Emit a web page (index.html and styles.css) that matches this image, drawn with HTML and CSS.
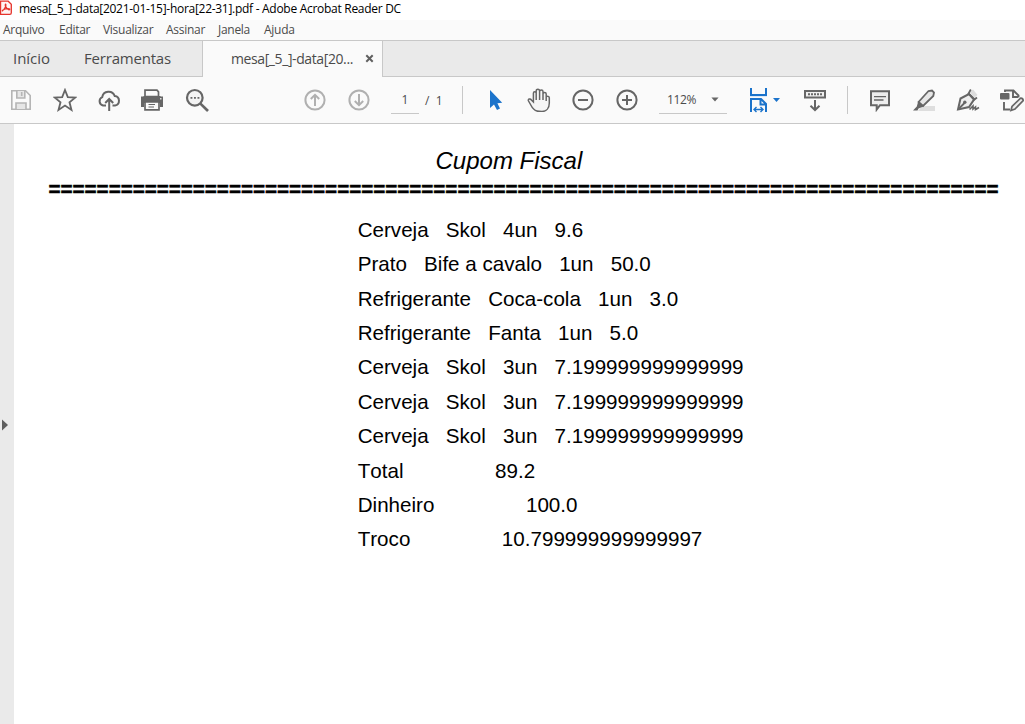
FILE: index.html
```html
<!DOCTYPE html>
<html lang="pt-BR">
<head>
<meta charset="utf-8">
<title>mesa[_5_]-data[2021-01-15]-hora[22-31].pdf - Adobe Acrobat Reader DC</title>
<link rel="stylesheet" href="styles.css">
</head>
<body>
<div class="window">
  <header class="titlebar">
    <svg class="app-icon" width="13" height="16" viewBox="0 0 13 16"><path d="M-2 1.2H8.2L11.3 4.3V12.8Q11.3 14.4 9.8 14.4H-2" fill="#fff4f3" stroke="#e5332c" stroke-width="1.3"/><path d="M.6 1V14.5" stroke="#e5332c" stroke-width="1.2"/><path d="M2.5 10.6C4 9.8 6.4 6 5.9 4.5C5.4 3.5 4.8 4.9 5.7 6.5C6.7 8.4 8.8 10.5 9.7 9.5C10.4 8.2 5.5 8.3 3.4 9.7C2.2 10.3 1.9 11.2 2.9 10.7" fill="none" stroke="#e5332c" stroke-width="1.2"/></svg>
    <span class="window-title">mesa[_5_]-data[2021-01-15]-hora[22-31].pdf - Adobe Acrobat Reader DC</span>
  </header>
  <nav class="menubar">
    <span class="m-file">Arquivo</span><span class="m-edit">Editar</span><span class="m-view">Visualizar</span><span class="m-sign">Assinar</span><span class="m-window">Janela</span><span class="m-help">Ajuda</span>
  </nav>
  <div class="tabs">
    <span class="tab home">Início</span>
    <span class="tab tools">Ferramentas</span>
    <div class="tab active"><span>mesa[_5_]-data[20...</span><svg width="9" height="9" viewBox="0 0 9 9"><path d="M1.3 1.3L7.7 7.7M7.7 1.3L1.3 7.7" stroke="#606060" stroke-width="2"/></svg></div>
  </div>
  <div class="toolbar">
    <div class="group files">
      <svg class="icon" viewBox="0 0 24 24"><g fill="none" stroke="#b5b5b5" stroke-width="1.6"><path d="M2.8 2.8H16.5L21.2 7.5V21.2H2.8Z"/><path d="M7.8 3V10H15.8V3M7 21V15H17V21" fill="#e6e6e6"/><path d="M12.7 4V8"/></g></svg>
      <svg class="icon" viewBox="0 0 24 24"><path d="M12 2L14.8 9.1L22.4 9.5L16.5 14.3L18.5 21.9L12 17.6L5.5 21.9L7.5 14.3L1.6 9.5L9.2 9.1Z" fill="none" stroke="#666" stroke-width="1.8"/></svg>
      <svg class="icon" viewBox="0 0 24 24"><g fill="none" stroke="#666" stroke-width="2"><path d="M9 17.5H6A4.4 4.4 0 0 1 5.2 9.2A6.5 6.5 0 0 1 17.7 8A4.8 4.8 0 0 1 18 17.5H15.5"/><path d="M12.2 23V11.5M8.2 15L12.2 11L16.2 15"/></g></svg>
      <svg class="icon" viewBox="1 0 24 24"><path d="M1 9.5H3.5V8H20.5V9.5H23V19H20V15H4V19H1Z" fill="#666"/><path d="M5 8.5V2.2H17L18.5 3.8V8.5ZM5 14V21.8H19V14Z" fill="#fafafa" stroke="#666" stroke-width="1.7"/><path d="M1 8.5H23V13.5H1Z" fill="#666"/><path d="M20 10H21.5V11.5H20Z" fill="#ddd"/><path d="M8.5 16.5H15M8.5 19H14" stroke="#666" stroke-width="1.2"/></svg>
      <svg class="icon" viewBox="0 0 24 24"><circle cx="9.8" cy="9.8" r="7.8" fill="#f3f3f3" stroke="#666" stroke-width="2.2"/><path d="M15.4 15.6L23 23" stroke="#666" stroke-width="2.7"/><path d="M5.5 9.8H7.4M9 9.8H10.9M12.5 9.8H14.4" stroke="#666" stroke-width="1.8"/></svg>
    </div>
    <div class="group pages">
      <svg class="icon" viewBox="0 0 24 24"><g fill="none" stroke="#b0b0b0" stroke-width="2"><circle cx="12" cy="12" r="9.6"/><path d="M12 18V7M7.8 11L12 6.8L16.2 11"/></g></svg>
      <svg class="icon" viewBox="0 0 24 24"><g fill="none" stroke="#b0b0b0" stroke-width="2"><circle cx="12" cy="12" r="9.6"/><path d="M12 6V17M7.8 13L12 17.2L16.2 13"/></g></svg>
    </div>
    <span class="field page-field">1</span>
    <span class="page-total">/&nbsp; 1</span>
    <i class="sep sep-one"></i>
    <div class="group nav">
      <svg class="icon" viewBox="-1 0 24 24"><path d="M6 2V20L10 16.5L13 22L16 20.5L13.4 15.2L18.2 14.7Z" fill="#1b73cb"/></svg>
      <svg class="icon" viewBox="0 0 24 24"><path d="M10 23C6.8 22.3 5 19.4 3.8 17L1.4 12.8C.8 11 3.3 10.2 4.4 12L6.4 14V5.2C6.4 3.2 9.2 3.2 9.2 5.2V12V3C9.2 .6 12.6 .6 12.6 3V12V3.5C12.6 1.4 16 1.4 16 3.5V12V6C16 3.9 19.2 3.9 19.2 6V13V9.5C19.2 7.7 22.3 7.7 22.3 9.8V15C22.3 20 19.5 23.5 15 23.5C13 23.5 11.4 23.5 10 23Z" fill="#f6f6f6" stroke="#666" stroke-width="1.5"/></svg>
      <svg class="icon" viewBox="0 0 24 24"><g fill="none" stroke="#666" stroke-width="2"><circle cx="12" cy="12" r="9.6"/><path d="M7 12H17"/></g></svg>
      <svg class="icon" viewBox="0 0 24 24"><g fill="none" stroke="#666" stroke-width="2"><circle cx="12" cy="12" r="9.6"/><path d="M7 12H17M12 7V17"/></g></svg>
    </div>
    <div class="field zoom-field"><span>112%</span><svg width="8" height="5" viewBox="0 0 8 5"><path d="M.4 .4H7.6L4 4.6Z" fill="#666"/></svg></div>
    <svg class="fit" width="32" height="26" viewBox="0 0 32 26"><path d="M1 8H18V10H1Z" fill="#dbeaf8"/><g fill="none" stroke="#1b73cb" stroke-width="2"><path d="M2 1V8H17V1M2 25V12H12L17 17V25M11.5 12V17.5H17"/><path d="M5 22.5H14M7.5 20L5 22.5L7.5 25M11.5 20L14 22.5L11.5 25" stroke-width="1.4"/></g><path d="M24 11H31L27.5 15Z" fill="#1b73cb"/></svg>
    <svg class="icon scroll" viewBox="0 0 24 24"><path d="M2 3H22V9.5H2Z" fill="#eee" stroke="#666" stroke-width="2"/><path d="M5 6.3H19" stroke="#666" stroke-width="2" stroke-dasharray="2 1"/><path d="M12 12V22M7.5 17.7L12 22L16.5 17.7" fill="none" stroke="#666" stroke-width="2"/></svg>
    <i class="sep sep-two"></i>
    <div class="group annotate">
      <svg class="icon" viewBox="0 0 24 24"><path d="M3 3.2H21V17.2H12L8.7 21.5V17.2H3Z" fill="#eee" stroke="#666" stroke-width="2"/><path d="M6 8.6H18M6 12H15.5" stroke="#666" stroke-width="1.3"/></svg>
      <svg class="icon" viewBox="0 0 24 24"><path d="M10 18H23V23H6Z" fill="#dedede"/><path d="M6.5 14L16.5 3L20 2.5L22 4.5L21.3 8L11 18Z" fill="#e6e6e6" stroke="#666" stroke-width="1.8"/><path d="M6.3 13L12 18.3L6.5 20.5L5.5 22.5H1L4.8 18.5Z" fill="#666"/></svg>
      <svg class="icon" viewBox="0 0 24 24"><path d="M14 4L17 1.5L21.5 7L18 10Z" fill="#ddd"/><path d="M2 21.5L4.5 10.5L13 6L18 11.5L13 19Z" fill="#eee" stroke="#666" stroke-width="2"/><path d="M14.8 1.5L12.5 5.5L18.5 11.5L21 9.5M2.5 21L8.5 15" fill="none" stroke="#666" stroke-width="1.8"/><circle cx="8.8" cy="14.3" r="1.7" fill="#666"/><path d="M13.5 21.5L17 18V21L19.5 19V21.5L23 19.5" fill="none" stroke="#666" stroke-width="1.6"/></svg>
      <svg class="icon" viewBox="0 0 24 24"><path d="M5 4V2.5H13.5L18.5 7.5V9.5M13 3V9H18M4 14V21.5H10" fill="none" stroke="#666" stroke-width="1.9"/><rect y="5" width="9.5" height="6.5" rx="1" fill="#666"/><path d="M11 22.5L12 18.5L20.5 10.2Q23 10 23.2 12.5L15 21Z" fill="#eee" stroke="#666" stroke-width="1.7"/></svg>
    </div>
  </div>
  <main class="viewer">
    <aside class="side"><svg width="6" height="12" viewBox="0 0 6 12"><path d="M0 .5L6 6L0 11.5Z" fill="#5e5e5e"/></svg></aside>
    <article class="receipt">
      <h1 class="heading">Cupom Fiscal</h1>
      <div class="rule">===============================================================================</div>
      <div class="lines">
        <p>Cerveja   Skol   4un   9.6</p>
        <p>Prato   Bife a cavalo   1un   50.0</p>
        <p>Refrigerante   Coca-cola   1un   3.0</p>
        <p>Refrigerante   Fanta   1un   5.0</p>
        <p>Cerveja   Skol   3un   7.199999999999999</p>
        <p>Cerveja   Skol   3un   7.199999999999999</p>
        <p>Cerveja   Skol   3un   7.199999999999999</p>
        <p>Total                89.2</p>
        <p>Dinheiro                100.0</p>
        <p>Troco                10.799999999999997</p>
      </div>
    </article>
  </main>
</div>
</body>
</html>
```
FILE: styles.css
```css
* { box-sizing: border-box; }
body { margin: 0; background: #fff; font-family: "Open Sans", sans-serif; }
.window { width: 1025px; height: 724px; overflow: hidden; display: flex; flex-direction: column; }
svg { display: block; flex: none; }
span { white-space: pre; }
.titlebar { height: 20px; display: flex; align-items: flex-start; flex: none; }
.window-title { font-size: 12px; line-height: 18px; margin-left: 6px; letter-spacing: -.285px; color: #000; }
.menubar { height: 20px; flex: none; display: flex; background: #fafafa; font-size: 12px; line-height: 20px; color: #4b4b4b; letter-spacing: -.28px; padding-left: 3px; }
.menubar span { flex: none; }
.m-file { width: 56px; }
.m-edit { width: 44px; }
.m-view { width: 63px; }
.m-sign { width: 52px; }
.m-window { width: 46px; }
.tabs { height: 37px; flex: none; display: flex; background: #eaeaea; border-top: 1px solid #c8c8c8; border-bottom: 1px solid #c8c8c8; color: #4b4b4b; }
.tab { flex: none; font-size: 15px; line-height: 35px; }
.home { width: 84px; padding-left: 13px; letter-spacing: -.05px; }
.tools { width: 118px; letter-spacing: -.2px; }
.active { width: 181px; height: 36px; display: flex; align-items: center; justify-content: space-between; padding: 0 8px 1px 28px; border-left: 1px solid #c8c8c8; border-right: 1px solid #c8c8c8; background: #fafafa; font-size: 14px; letter-spacing: -.4px; }
.toolbar { height: 47px; flex: none; display: flex; align-items: center; background: #fafafa; border-bottom: 1px solid #c8c8c8; color: #4b4b4b; font-size: 12px; }
.group { display: flex; flex: none; }
.icon { width: 24px; height: 24px; margin: 0 10px; }
.files { margin-left: -1px; }
.pages { margin-left: 74px; }
.field { height: 27px; line-height: 26px; border-bottom: 1px solid #c8c8c8; flex: none; }
.page-field { width: 28px; margin-left: 10px; text-align: center; }
.page-total { width: 37px; margin-left: 6px; flex: none; }
.sep { width: 1px; height: 28px; background: #c8c8c8; flex: none; }
.nav { margin-left: 10px; }
.zoom-field { width: 68px; margin-left: 10px; padding: 0 8px; display: flex; justify-content: space-between; align-items: center; letter-spacing: -.4px; }
.fit { margin-left: 22px; }
.scroll { margin: 0 20px 0 22px; flex: none; }
.annotate { margin-left: 10px; }
.viewer { flex: 1; display: flex; }
.side { width: 14px; flex: none; background: #eaeaea; padding: 295px 0 0 2px; }
.receipt { flex: 1; font-family: "Liberation Sans", Arial, sans-serif; color: #000; white-space: nowrap; font-kerning: none; }
.heading { margin: 24px 0 0 421.5px; font-size: 24px; line-height: 26px; font-style: italic; font-weight: 400; }
.rule { margin: 3px 0 0 34.5px; font-size: 20.6px; line-height: 24px; font-weight: 700; -webkit-text-stroke: .5px #000; }
.lines { margin: 12px 0 0 343.7px; font-size: 20.6px; }
.lines p { margin: 0; line-height: 34.36px; white-space: pre; }
```
